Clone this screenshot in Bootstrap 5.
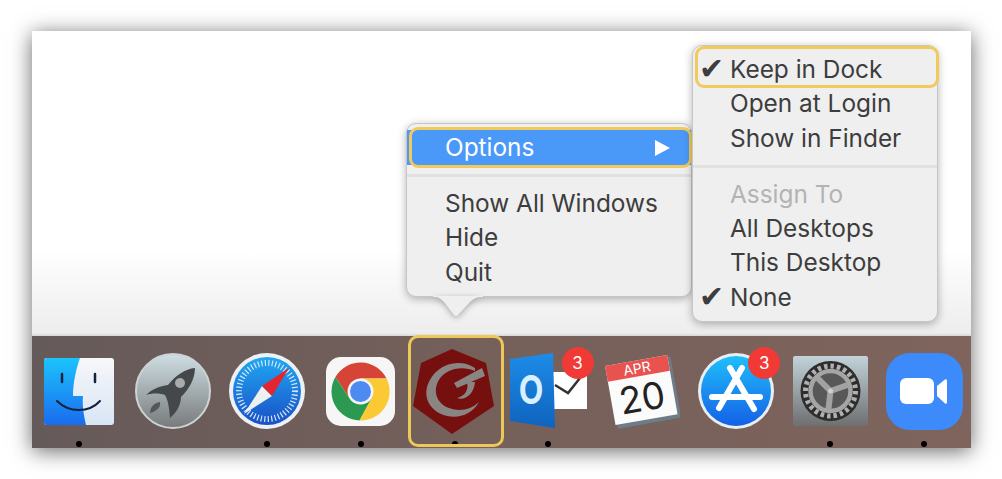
<!DOCTYPE html>
<html lang="en">
<head>
    <meta charset="UTF-8">
    <meta name="viewport" content="width=device-width, initial-scale=1.0">
    <title>Dock Options</title>
    <link href="https://cdn.jsdelivr.net/npm/bootstrap@5.3.0/dist/css/bootstrap.min.css" rel="stylesheet">
    <style>
        html, body { height: 100%; overflow: hidden; background: #fff; }
        .shot-wrap { padding: 31px 31px 0 32px; }
        .mac-window { height: 417px; box-shadow: 0 3px 20px rgba(0,0,0,.6); background: #fff; }
        .desk-area { background: linear-gradient(to bottom, #fff 72%, #ededed 99%, #d6d6d6 100%); }
        .dock-bar { height: 112px; background: linear-gradient(to right, #655a5a, #76605a 50%, #7e645d); }
        .dock-item { flex: 1 1 0; }
        .dock-icon { height: 78px; margin-top: 16px; }
        .dock-dot { width: 6px; height: 6px; margin-top: 11px; background: #000; border-radius: 50%; }
        .dock-count { position: absolute; top: 11px; width: 32px; height: 32px; background: #f13a35; color: #fff; border-radius: 50%; font: 17px/32px Inter, sans-serif; text-align: center; }
        .count-mail { left: 60px; }
        .count-store { left: 59px; }
        .dock-mark { position: absolute; left: 0; top: -1px; width: 96px; height: 112px; border: 3px solid #eec759; border-radius: 10px; }
        .ctx-menu { position: absolute; background: #efefef; border: 1px solid #c6c6c6; border-radius: 10px; box-shadow: 0 2px 9px rgba(0,0,0,.3); font-family: Inter, "Liberation Sans", sans-serif; font-size: 24.4px; color: #3d3d3d; }
        .ctx-left { left: 374px; top: 92px; width: 286px; height: 174px; padding-top: 6px; }
        .ctx-right { left: 660px; top: 14px; width: 246px; height: 277px; padding-top: 6px; }
        .ctx-row { position: relative; height: 34.3px; line-height: 34.3px; padding-left: 38px; white-space: nowrap; }
        .ctx-right .ctx-row { padding-left: 37px; }
        .ctx-row .tick { position: absolute; left: 6px; top: 0; font-family: "DejaVu Sans", sans-serif; font-size: 30px; }
        .ctx-active { height: 35px; background: #4a99f8; color: #fff; padding-right: 21px; }
        .ctx-muted { color: #b3b3b3; }
        .ctx-line { height: 3px; background: #e1e1e1; }
        .ctx-left .ctx-line { margin: 9px 0 9px; }
        .ctx-right .ctx-line { margin: 10px 0 9px; }
        .sub-arrow { width: 0; height: 0; border-left: 15px solid #fff; border-top: 8px solid transparent; border-bottom: 8px solid transparent; }
        .row-mark { position: absolute; border: 3px solid #f0cb5c; border-radius: 9px; }
        .mark-options { left: 2px; right: -1px; top: -3px; bottom: -3px; }
        .mark-keep { left: 2px; right: -2px; top: -6px; bottom: -2px; }
        .menu-tip { position: absolute; left: 26px; top: 172px; filter: drop-shadow(0 2px 3px rgba(0,0,0,.3)); }
    </style>
</head>

<body class="m-0">
    <div class="shot-wrap">
        <div class="mac-window position-relative d-flex flex-column">
            <div class="desk-area flex-grow-1"></div>

            <!-- Dock -->
            <div class="dock-bar d-flex">
                <div class="dock-item d-flex flex-column align-items-center">
                    <div class="dock-icon d-flex align-items-center">
                        <svg width="70" height="67" viewBox="0 0 70 67">
                            <defs>
                                <linearGradient id="finderBlue" x1="0" y1="0" x2="0" y2="1"><stop offset="0" stop-color="#1cc4fc"/><stop offset="1" stop-color="#1a6bef"/></linearGradient>
                                <linearGradient id="finderWhite" x1="0" y1="0" x2="0" y2="1"><stop offset="0" stop-color="#f7f7f9"/><stop offset="1" stop-color="#d8e6f5"/></linearGradient>
                            </defs>
                            <rect width="70" height="67" rx="3" fill="url(#finderWhite)"/>
                            <path d="M3 0H36C32 11 29 25 29 38H39C38 48 40 58 42 67H3A3 3 0 0 1 0 64V3A3 3 0 0 1 3 0Z" fill="url(#finderBlue)"/>
                            <path d="M18 16V24M51 16V24" stroke="#12233f" stroke-width="2.5" stroke-linecap="round"/>
                            <path d="M13 43C25 55 45 55 56 43" fill="none" stroke="#10213d" stroke-width="2" stroke-linecap="round"/>
                        </svg>
                    </div>
                    <div class="dock-dot"></div>
                </div>

                <div class="dock-item d-flex flex-column align-items-center">
                    <div class="dock-icon d-flex align-items-center">
                        <svg width="76" height="76" viewBox="0 0 76 76">
                            <defs>
                                <linearGradient id="rocketBg" x1="0" y1="0" x2="0" y2="1"><stop offset="0" stop-color="#cfdfe4"/><stop offset="1" stop-color="#777a7b"/></linearGradient>
                            </defs>
                            <circle cx="38" cy="38" r="37" fill="url(#rocketBg)" stroke="#cdd3d4" stroke-width="2"/>
                            <path d="M60 15C50 16 41 22 33 32C25 33 17 36 11 42C17 40 24 40 30 42C32 46 34 50 35 65C40 61 46 53 46 44C54 36 60 26 60 15Z" fill="#45484b"/>
                            <path d="M15 60C15 54 19 50 25 49C26 54 22 58 15 60Z" fill="#55585a"/>
                            <circle cx="45" cy="30" r="5" fill="#a8abac"/>
                        </svg>
                    </div>
                    <div class="dock-dot invisible"></div>
                </div>

                <div class="dock-item d-flex flex-column align-items-center">
                    <div class="dock-icon d-flex align-items-center">
                        <svg width="76" height="76" viewBox="0 0 76 76">
                            <defs>
                                <linearGradient id="safariBg" x1="0" y1="0" x2="0" y2="1"><stop offset="0" stop-color="#1fa8f3"/><stop offset="1" stop-color="#1a50c6"/></linearGradient>
                            </defs>
                            <circle cx="38" cy="38" r="38" fill="#edf1f5"/>
                            <circle cx="38" cy="38" r="34" fill="url(#safariBg)"/>
                            <circle cx="38" cy="38" r="28" fill="none" stroke="#d4e6fa" stroke-width="6" stroke-dasharray="1.2 2.3"/>
                            <polygon points="15,61 33,33 43,43" fill="#eef0f2"/>
                            <polygon points="60,15 33,33 43,43" fill="#e3262e"/>
                        </svg>
                    </div>
                    <div class="dock-dot"></div>
                </div>

                <div class="dock-item d-flex flex-column align-items-center">
                    <div class="dock-icon d-flex align-items-center">
                        <svg width="69" height="69" viewBox="-34.5 -34.5 69 69">
                            <rect x="-34.5" y="-34.5" width="69" height="69" rx="15" fill="#f6f6f6"/>
                            <path d="M-25.1-14.5A29 29 0 0 1 26-13L0-13-11.3 6.5Z" fill="#d64437"/>
                            <path d="M-25.1-14.5L-11.3 6.5 11.3 6.5-1 29A29 29 0 0 1-25.1-14.5Z" fill="#2b9a50"/>
                            <path d="M26-13A29 29 0 0 1-1 29L11.3 6.5 0-13Z" fill="#fbc934"/>
                            <circle r="13" fill="#f4f4f4"/>
                            <circle r="10.5" fill="#4d8bf0"/>
                        </svg>
                    </div>
                    <div class="dock-dot"></div>
                </div>

                <div class="dock-item d-flex flex-column align-items-center position-relative">
                    <div class="dock-icon d-flex align-items-center">
                        <svg width="90" height="90" viewBox="1 0 90 90">
                            <polygon points="43,3 77,17 85,60 43,88 4,60 12,17" fill="#76100f"/>
                            <path d="M66 22C55 14 36 15 25 28C13 42 15 60 32 68C46 74 62 70 70 56C62 64 50 66 40 62C26 57 23 42 32 31C40 22 54 20 66 25Z" fill="#8a8483"/>
                            <polygon points="45,37 73,22 76,30 48,42" fill="#8a8483"/>
                            <path d="M58 36C60 44 56 50 48 52C56 55 65 48 66 36Z" fill="#8a8483"/>
                        </svg>
                    </div>
                    <div class="dock-dot"></div>
                    <div class="dock-mark"></div>
                </div>

                <div class="dock-item d-flex flex-column align-items-center position-relative">
                    <div class="dock-icon d-flex align-items-center">
                        <svg width="78" height="78" viewBox="0 0 78 78">
                            <defs>
                                <linearGradient id="outlookDoor" x1="0" y1="0" x2="0" y2="1"><stop offset="0" stop-color="#1d8ce8"/><stop offset="1" stop-color="#0f63bd"/></linearGradient>
                            </defs>
                            <rect x="44" y="20" width="34" height="37" fill="#fff"/>
                            <path d="M46 33L59 41 71 26" fill="none" stroke="#333" stroke-width="2.5"/>
                            <polygon points="1,7 44,1 46,76 1,69" fill="url(#outlookDoor)"/>
                            <text transform="translate(22 52) scale(.82 1)" text-anchor="middle" font-family="Inter, sans-serif" font-weight="700" font-size="39" fill="#d8f0ff">O</text>
                        </svg>
                    </div>
                    <div class="dock-dot"></div>
                    <div class="dock-count count-mail">3</div>
                </div>

                <div class="dock-item d-flex flex-column align-items-center">
                    <div class="dock-icon d-flex align-items-center">
                        <svg width="76" height="76" viewBox="0 0 76 76">
                            <g transform="rotate(-10 38 38)">
                                <rect x="8" y="9" width="64" height="62" fill="#6c7c88"/>
                                <rect x="6" y="7" width="63" height="60" fill="#fbfbfb"/>
                                <rect x="6" y="7" width="63" height="16" fill="#e8524f"/>
                                <text x="37" y="20" text-anchor="middle" font-family="Inter, sans-serif" font-size="14" fill="#fff">APR</text>
                                <text x="37" y="58" text-anchor="middle" font-family="Inter, sans-serif" font-size="37" fill="#222">20</text>
                            </g>
                        </svg>
                    </div>
                    <div class="dock-dot invisible"></div>
                </div>

                <div class="dock-item d-flex flex-column align-items-center position-relative">
                    <div class="dock-icon d-flex align-items-center">
                        <svg width="76" height="76" viewBox="0 0 76 76">
                            <defs>
                                <linearGradient id="storeBg" x1="0" y1="0" x2="0" y2="1"><stop offset="0" stop-color="#1fbefb"/><stop offset="1" stop-color="#1560e6"/></linearGradient>
                            </defs>
                            <circle cx="38" cy="38" r="38" fill="#e9eef2"/>
                            <circle cx="38" cy="38" r="35" fill="url(#storeBg)"/>
                            <path d="M32 15L56 56M44 15L21 55M14 44H62" fill="none" stroke="#fff" stroke-width="6" stroke-linecap="round"/>
                        </svg>
                    </div>
                    <div class="dock-dot invisible"></div>
                    <div class="dock-count count-store">3</div>
                </div>

                <div class="dock-item d-flex flex-column align-items-center">
                    <div class="dock-icon d-flex align-items-center">
                        <svg width="75" height="70" viewBox="0 0 75 70">
                            <defs>
                                <linearGradient id="gearBg" x1="0" y1="0" x2="0" y2="1"><stop offset="0" stop-color="#c2d3d9"/><stop offset="1" stop-color="#6e6f70"/></linearGradient>
                            </defs>
                            <rect width="75" height="70" rx="2" fill="url(#gearBg)"/>
                            <circle cx="37.5" cy="35" r="30" fill="#2d2d2d"/>
                            <circle cx="37.5" cy="35" r="25" fill="none" stroke="#b0b0b0" stroke-width="5" stroke-dasharray="3.500 3"/>
                            <circle cx="37.5" cy="35" r="20" fill="#585858" stroke="#a5a5a5" stroke-width="4.500"/>
                            <path d="M37.5 35L24.500 22M37.5 35L54.500 29M37.5 35L35.500 53" stroke="#a2a2a2" stroke-width="6"/>
                            <circle cx="37.5" cy="35" r="2.500" fill="#cfcfcf"/>
                        </svg>
                    </div>
                    <div class="dock-dot"></div>
                </div>

                <div class="dock-item d-flex flex-column align-items-center">
                    <div class="dock-icon d-flex align-items-center">
                        <svg width="77" height="77" viewBox="1 0 77 77">
                            <rect x="1" width="77" height="77" rx="24" fill="#3d8bfb"/>
                            <rect x="15" y="25" width="34" height="26" rx="6" fill="#fff"/>
                            <path d="M52 33L60 26.500Q62 25.500 62 28V49Q62 51.500 60 50.500L52 43Z" fill="#fff"/>
                        </svg>
                    </div>
                    <div class="dock-dot"></div>
                </div>
            </div>

            <!-- App context menu -->
            <div class="ctx-menu ctx-left">
                <div class="ctx-row ctx-active d-flex align-items-center justify-content-between">
                    <span>Options</span>
                    <span class="sub-arrow"></span>
                    <div class="row-mark mark-options"></div>
                </div>
                <div class="ctx-line"></div>
                <div class="ctx-row">Show All Windows</div>
                <div class="ctx-row">Hide</div>
                <div class="ctx-row">Quit</div>
                <svg class="menu-tip" width="50" height="24" viewBox="0 0 50 24">
                    <path d="M0 1H1C6 1 8 3 11 6L21 19Q23 21 25 19L37 6C40 3 43 1 48 1H50V0H0Z" fill="#efefef"/>
                </svg>
            </div>

            <!-- Options submenu -->
            <div class="ctx-menu ctx-right">
                <div class="ctx-row"><span class="tick">✔</span>Keep in Dock<div class="row-mark mark-keep"></div></div>
                <div class="ctx-row">Open at Login</div>
                <div class="ctx-row">Show in Finder</div>
                <div class="ctx-line"></div>
                <div class="ctx-row ctx-muted">Assign To</div>
                <div class="ctx-row">All Desktops</div>
                <div class="ctx-row">This Desktop</div>
                <div class="ctx-row"><span class="tick">✔</span>None</div>
            </div>
        </div>
    </div>

    <script src="https://cdn.jsdelivr.net/npm/bootstrap@5.3.0/dist/js/bootstrap.bundle.min.js"></script>
</body>

</html>
